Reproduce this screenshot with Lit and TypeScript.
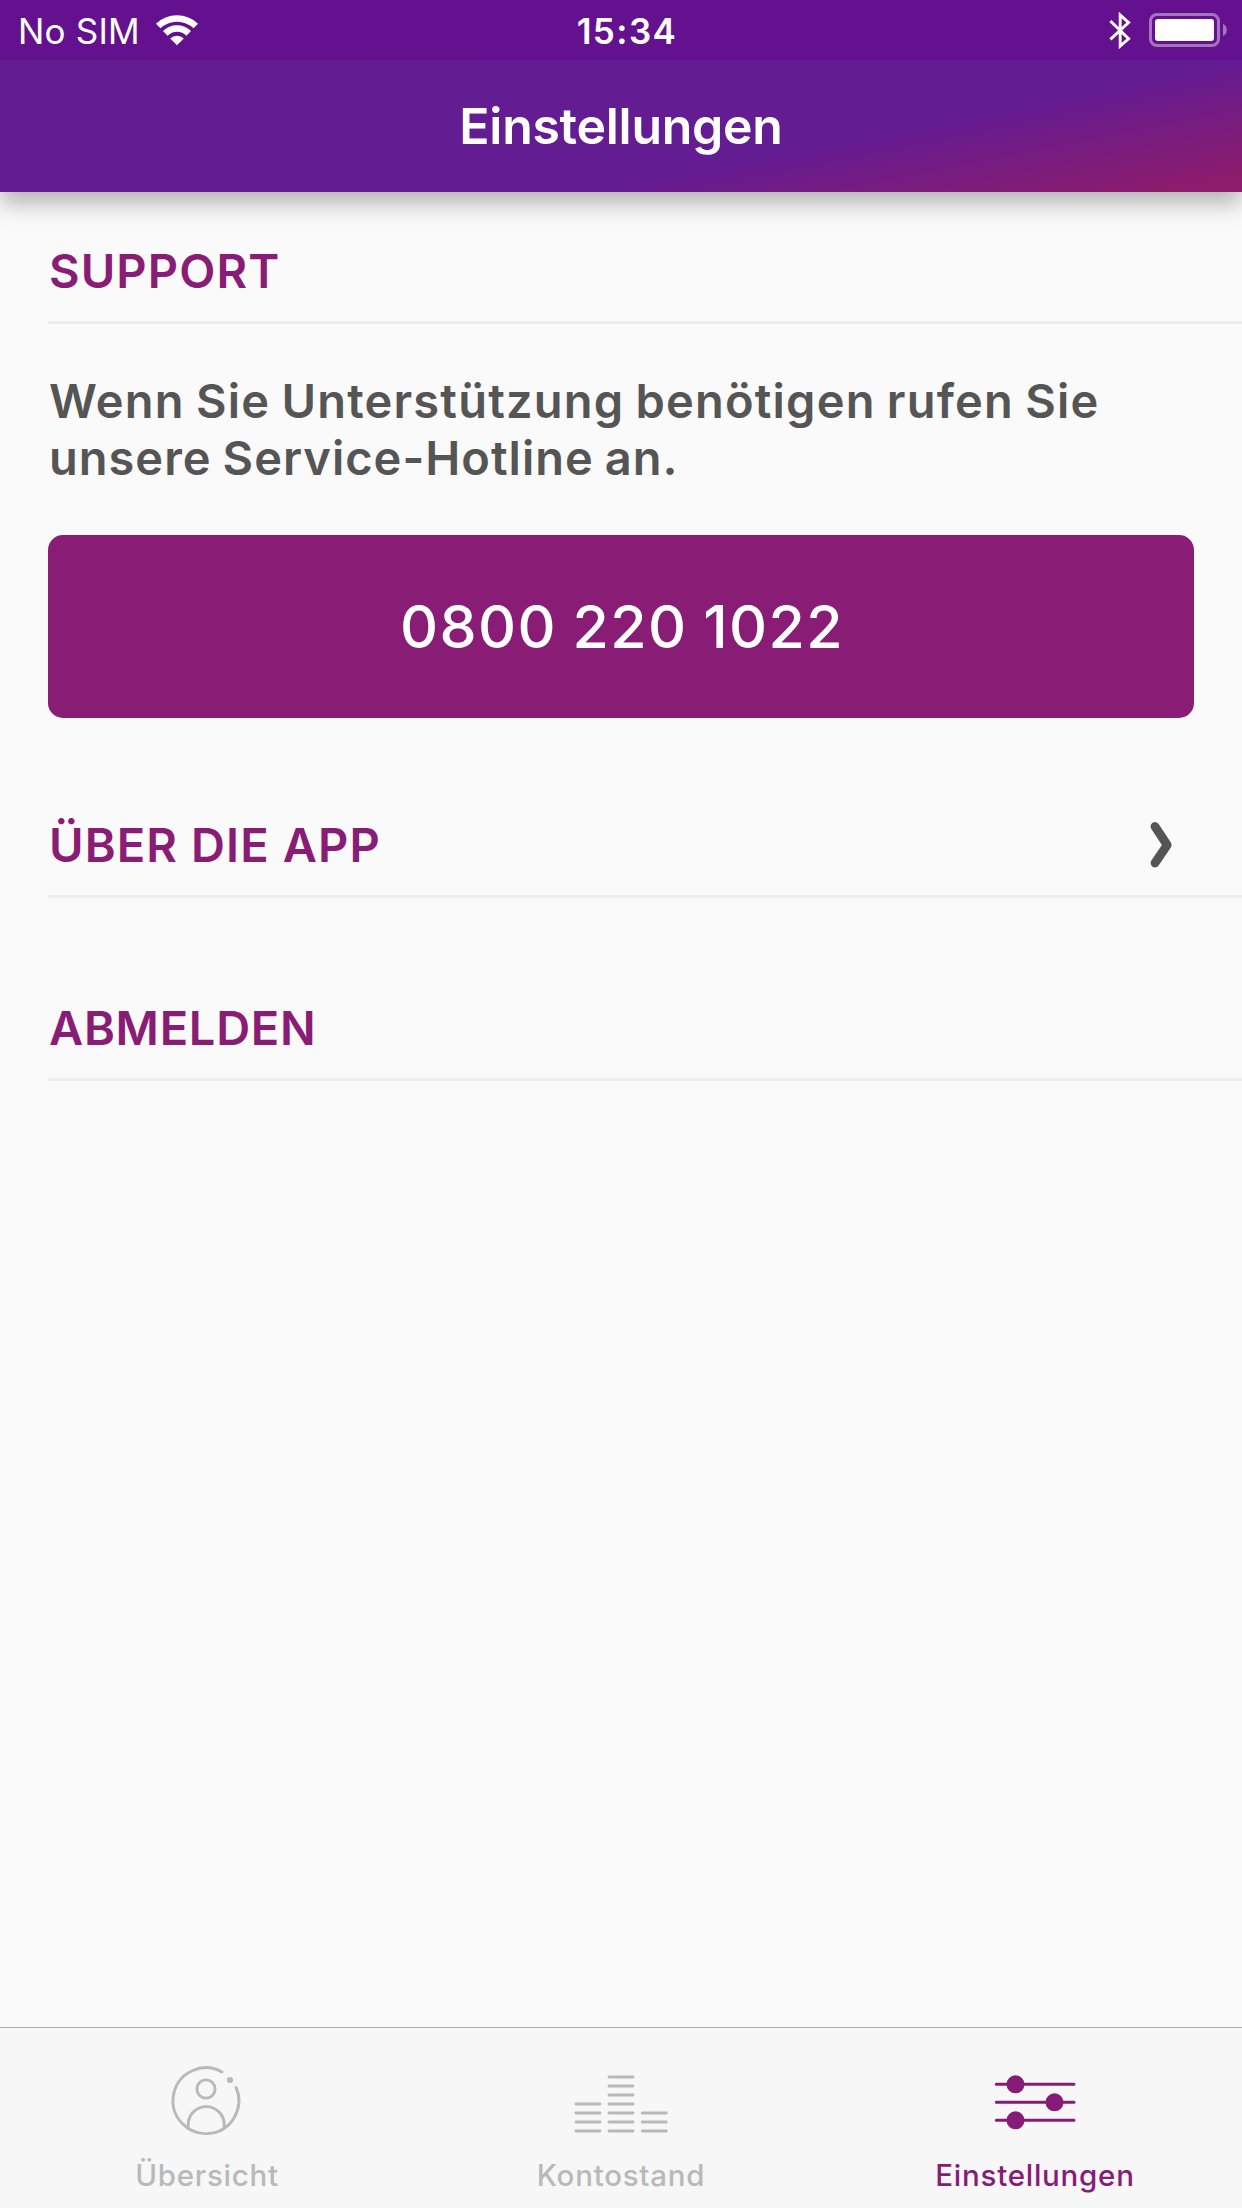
import { LitElement, html, css, svg } from "lit";
import { customElement, property } from "lit/decorators.js";
import { classMap } from "lit/directives/class-map.js";

@customElement("status-bar")
export class StatusBar extends LitElement {
  static styles = css`
    :host {
      display: grid;
      grid-template-columns: 1fr auto 1fr;
      height: 60px;
      background: #64118f;
      color: #fff;
      font-size: 35px;
      line-height: 62px;
    }
    .left {
      display: flex;
      align-items: flex-start;
      padding-left: 18px;
      letter-spacing: 0.2px;
    }
    .wifi {
      display: block;
      margin: 13px 0 0 15.2px;
    }
    .time {
      padding-left: 12px;
      font-weight: 600;
      letter-spacing: 1.44px;
    }
    .right {
      display: flex;
      justify-content: flex-end;
      align-items: flex-start;
      gap: 16px;
      padding: 10px 14px 0 0;
    }
    .right svg {
      display: block;
    }
  `;

  render() {
    return html`
      <div class="left">
        <span>No SIM</span>
        <svg class="wifi" width="44" height="34" viewBox="0 0 44 34">
          <g fill="none" stroke="#fff" stroke-width="6.5">
            <path d="M3.2 13A27 27 0 0 1 40.8 13" />
            <path d="M10.3 20.4A16.6 16.6 0 0 1 33.7 20.4" />
          </g>
          <path d="M22 32.3L15.2 25.5A9.6 9.6 0 0 1 28.8 25.5Z" fill="#fff" />
        </svg>
      </div>
      <div class="time">15:34</div>
      <div class="right">
        <svg width="24" height="40" viewBox="0 0 24 40">
          <path
            d="M2.4 11L20.6 28.8L12.2 36V5L20.6 12.6L2.4 29.4"
            fill="none"
            stroke="#fff"
            stroke-width="2.9"
          />
        </svg>
        <svg width="80" height="40" viewBox="0 0 80 40">
          <rect x="2.5" y="4.5" width="68" height="31" rx="6.5" fill="none" stroke="#fff" stroke-opacity="0.42" stroke-width="3" />
          <rect x="7" y="9" width="59" height="22" rx="3" fill="#fff" />
          <path d="M75 14C80 15.5 80 24.5 75 26Z" fill="#fff" fill-opacity="0.42" />
        </svg>
      </div>
    `;
  }
}

@customElement("section-row")
export class SectionRow extends LitElement {
  @property() label = "";
  @property({ type: Boolean }) chevron = false;

  static styles = css`
    :host {
      display: flex;
      align-items: center;
      justify-content: space-between;
      height: 100px;
      border-bottom: 3px solid #ececee;
      color: #891c74;
      font-size: 47px;
      font-weight: 600;
      line-height: 100px;
      letter-spacing: 1.1px;
    }
    .label {
      padding-left: 1px;
    }
    .chevron {
      display: block;
      margin-right: 66px;
    }
  `;

  render() {
    return html`
      <span class="label">${this.label}</span>
      ${this.chevron
        ? html`<svg class="chevron" width="28" height="50" viewBox="0 0 28 50">
            <path d="M7 6.5L19.2 25L7 43" fill="none" stroke="#555" stroke-width="8.8" stroke-linecap="round" stroke-linejoin="round" />
          </svg>`
        : null}
    `;
  }
}

const accountIcon = svg`
  <g fill="none" stroke="currentColor" stroke-width="2.9" stroke-linecap="round">
    <path d="M65 12A32.9 32.9 0 1 0 79 27.4" />
    <circle cx="49" cy="29" r="9.1" />
    <path d="M31.2 68V64.6A18 18 0 0 1 67.2 64.6V68" />
  </g>
  <circle cx="73" cy="20" r="3.1" fill="currentColor" />`;

const balanceColumns = [
  { x: 5, count: 4 },
  { x: 38, count: 7 },
  { x: 71.3, count: 3 },
];

const balanceIcon = svg`
  <g stroke="currentColor" stroke-width="2.9" stroke-linecap="round">
    ${balanceColumns.flatMap(({ x, count }) =>
      Array.from({ length: count }, (_, i) => svg`<line x1=${x} x2=${x + 24} y1=${71 - i * 9} y2=${71 - i * 9} />`),
    )}
  </g>`;

const slidersIcon = svg`
  <g stroke="currentColor" stroke-width="3" stroke-linecap="round">
    <path d="M11.3 24.3H89M11.3 42.3H89M11.3 60.3H89" />
  </g>
  <g fill="currentColor">
    <circle cx="30.5" cy="24.3" r="9" />
    <circle cx="69.5" cy="42.3" r="9" />
    <circle cx="30.5" cy="60.3" r="9" />
  </g>`;

@customElement("tab-bar")
export class TabBar extends LitElement {
  @property() active = "Einstellungen";

  private tabs = [
    { label: "Übersicht", icon: accountIcon },
    { label: "Kontostand", icon: balanceIcon },
    { label: "Einstellungen", icon: slidersIcon },
  ];

  static styles = css`
    :host {
      display: grid;
      grid-template-columns: repeat(3, 1fr);
      box-sizing: border-box;
      height: 181px;
      border-top: 1px solid #aeaeae;
      background: #f7f7f7;
    }
    .tab {
      display: flex;
      flex-direction: column;
      align-items: center;
      gap: 17px;
      padding-top: 32px;
      color: #b9b9b9;
      font-size: 29.5px;
      font-weight: 500;
      line-height: 36px;
      letter-spacing: 0.75px;
    }
    .active {
      color: #861c78;
    }
    .icon {
      display: block;
    }
  `;

  render() {
    return this.tabs.map(
      ({ label, icon }) => html`
        <div class=${classMap({ tab: true, active: label === this.active })}>
          <svg class="icon" width="100" height="80" viewBox="0 0 100 80">${icon}</svg>
          <span>${label}</span>
        </div>
      `,
    );
  }
}

@customElement("app-root")
export class AppRoot extends LitElement {
  static styles = css`
    :host {
      display: flex;
      flex-direction: column;
      width: 100%;
      height: 100vh;
      overflow: hidden;
      background: #fafafa;
      font-family: Inter, "Liberation Sans", sans-serif;
    }
    .header {
      flex: none;
      height: 192px;
      background: linear-gradient(168.7deg, #641c90 0%, #641c93 70%, #8d1c6c 97%);
      box-shadow: 0 11px 22px rgba(0, 0, 0, 0.29);
    }
    .title {
      margin: 0;
      color: #fff;
      font-size: 50px;
      font-weight: 600;
      line-height: 132px;
      letter-spacing: -0.28px;
      text-align: center;
    }
    .content {
      flex: 1;
      display: flex;
      flex-direction: column;
      padding: 29px 0 0 48px;
    }
    .hint {
      margin: 48px 48px 49px 1px;
      color: #555;
      font-size: 47px;
      font-weight: 600;
      line-height: 57px;
      letter-spacing: 1.2px;
      word-spacing: -1.8px;
      white-space: nowrap;
    }
    .second {
      letter-spacing: 1px;
    }
    .call {
      display: block;
      height: 183px;
      margin: 0 48px 77px 0;
      padding: 1px 0 0 2px;
      border: 0;
      border-radius: 15px;
      background: #891c74;
      color: #fff;
      font: 500 59px / 182px Inter, "Liberation Sans", sans-serif;
      letter-spacing: 1.4px;
      word-spacing: -1.5px;
      text-align: center;
    }
    .about {
      margin-bottom: 80px;
    }
    .logout {
      letter-spacing: 0.72px;
    }
  `;

  render() {
    return html`
      <header class="header">
        <status-bar></status-bar>
        <h1 class="title">Einstellungen</h1>
      </header>
      <main class="content">
        <section-row label="SUPPORT"></section-row>
        <p class="hint">
          Wenn Sie Unterstützung benötigen rufen Sie<br /><span class="second">unsere Service-Hotline an.</span>
        </p>
        <button class="call">0800 220 1022</button>
        <section-row class="about" label="ÜBER DIE APP" chevron></section-row>
        <section-row class="logout" label="ABMELDEN"></section-row>
      </main>
      <tab-bar></tab-bar>
    `;
  }
}
